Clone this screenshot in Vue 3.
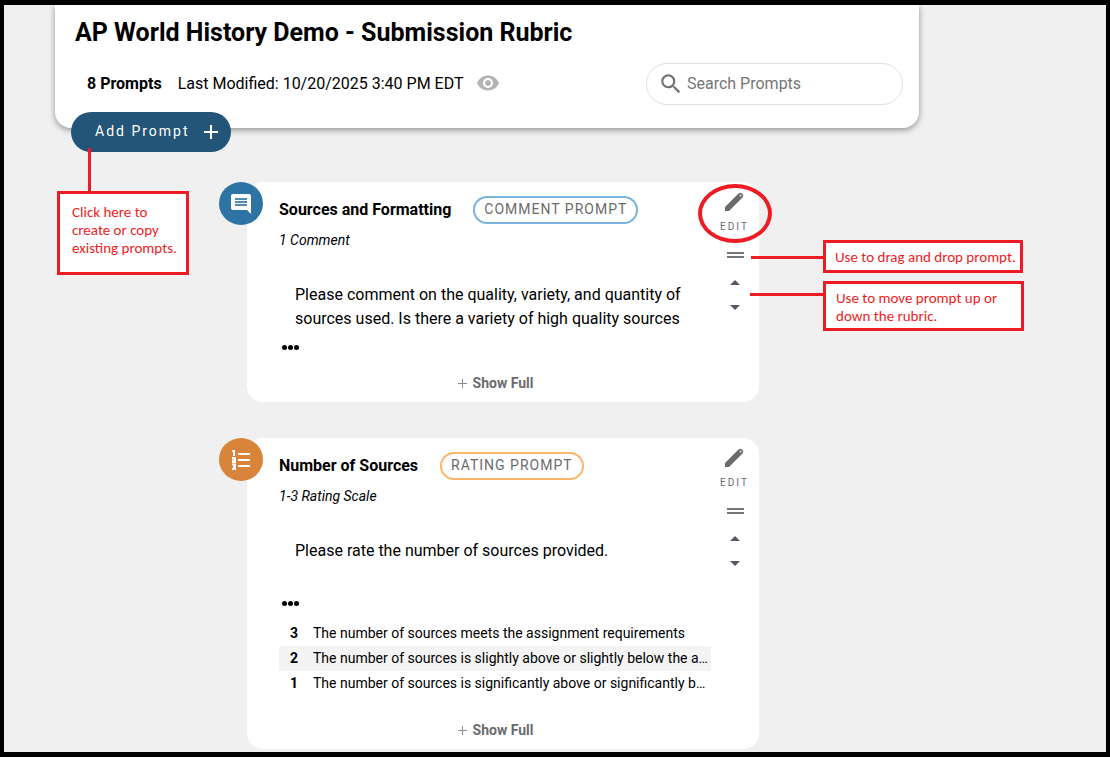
<script setup>
import { ref } from 'vue'

const search = ref('')

const prompts = [
  {
    id: 'formatting',
    kind: 'comment',
    title: 'Sources and Formatting',
    badge: 'COMMENT PROMPT',
    subtitle: '1 Comment',
    text: 'Please comment on the quality, variety, and quantity of sources used. Is there a variety of high quality sources',
    ratings: [],
  },
  {
    id: 'number',
    kind: 'rating',
    title: 'Number of Sources',
    badge: 'RATING PROMPT',
    subtitle: '1-3 Rating Scale',
    text: 'Please rate the number of sources provided.',
    ratings: [
      { score: 3, label: 'The number of sources meets the assignment requirements' },
      { score: 2, label: 'The number of sources is slightly above or slightly below the a…' },
      { score: 1, label: 'The number of sources is significantly above or significantly b…' },
    ],
  },
]
</script>

<template>
  <main class="frame">
    <header class="header">
      <h1>AP World History Demo - Submission Rubric</h1>
      <div class="meta">
        <div class="facts">
          <strong>8 Prompts</strong>
          <span>Last Modified: 10/20/2025 3:40 PM EDT</span>
          <button class="plain eye" type="button" aria-label="Preview">
            <svg width="24" height="24" viewBox="0 0 24 24" fill="#b4b4b4">
              <path d="M12 4.500C7 4.500 2.730 7.610 1 12c1.730 4.390 6 7.500 11 7.500s9.270-3.110 11-7.500c-1.730-4.390-6-7.500-11-7.500zM12 17c-2.760 0-5-2.240-5-5s2.240-5 5-5 5 2.240 5 5-2.240 5-5 5zm0-8c-1.660 0-3 1.340-3 3s1.340 3 3 3 3-1.340 3-3-1.340-3-3-3z" />
            </svg>
          </button>
        </div>
        <label class="search">
          <svg width="26" height="26" viewBox="0 0 24 24" fill="#737373">
            <path d="M15.500 14h-.79l-.28-.27A6.471 6.471 0 0 0 16 9.500 6.500 6.500 0 1 0 9.500 16c1.610 0 3.090-.59 4.230-1.570l.27.28v.79l5 4.990L20.490 19l-4.990-5zm-6 0C7.010 14 5 11.990 5 9.500S7.010 5 9.500 5 14 7.010 14 9.500 11.990 14 9.500 14z" />
          </svg>
          <input v-model="search" type="text" placeholder="Search Prompts" aria-label="Search Prompts" />
        </label>
      </div>
    </header>

    <button class="add" type="button">
      <span>Add Prompt</span>
      <svg width="16" height="16" viewBox="0 0 16 16" stroke="#fff" stroke-width="2">
        <path d="M8 1v14M1 8h14" />
      </svg>
    </button>

    <section class="cards">
      <article v-for="p in prompts" :key="p.id" class="card" :class="p.kind">
        <div class="kind-icon">
          <svg v-if="p.kind === 'comment'" width="24" height="24" viewBox="0 0 24 24">
            <path fill="#fff" d="M21.990 4c0-1.100-.89-2-1.990-2H4c-1.100 0-2 .9-2 2v12c0 1.100.9 2 2 2h14l4 4z" />
            <path stroke="#4f8bb5" stroke-width="2" d="M6 7h12M6 10h12M6 13h12" />
          </svg>
          <svg v-else width="22" height="22" viewBox="0 0 22 22" fill="none" stroke="#fff">
            <path d="M8 5h12M8 11h12M8 17h12" stroke-width="2" />
            <path d="M2 2h2v5M2 9h3.500M5 9v2.500H3V13h3M2 15.500h3v4.500H2M3 18h2" stroke-width="2" />
          </svg>
        </div>

        <div class="body">
          <div class="head">
            <h2>{{ p.title }}</h2>
            <span class="badge">{{ p.badge }}</span>
          </div>
          <p class="subtitle">{{ p.subtitle }}</p>
          <p class="text">{{ p.text }}</p>
          <div class="dots"><i></i><i></i><i></i></div>
          <table v-if="p.ratings.length" class="ratings">
            <tbody>
              <tr v-for="r in p.ratings" :key="r.score">
                <th scope="row">{{ r.score }}</th>
                <td>{{ r.label }}</td>
              </tr>
            </tbody>
          </table>
          <button class="plain show" type="button">
            <svg width="10" height="10" viewBox="0 0 10 10" stroke="#8c8c96">
              <path d="M5.500 1v9M1 5.500h9" />
            </svg>
            Show Full
          </button>
        </div>

        <div class="tools">
          <button class="plain edit" type="button">
            <svg width="24" height="24" viewBox="0 0 24 24">
              <path fill="#6b6b6b" d="M3 17V21h4L20.500 7.500a2.600 2.600 0 0 0 0-3.600l-.4-.4a2.600 2.600 0 0 0-3.600 0z" />
              <circle cx="18.500" cy="5.500" r="1" fill="#e4e4e4" />
            </svg>
            <span>EDIT</span>
          </button>
          <button class="plain drag" type="button" aria-label="Drag">
            <svg width="18" height="8" viewBox="0 0 18 8" fill="#757575">
              <path d="M1 1h17v2H1zM1 5h17v2H1z" />
            </svg>
          </button>
          <button class="plain arrow" type="button" aria-label="Move up">
            <svg width="10" height="5" viewBox="0 0 10 5" fill="#54566b"><path d="M0 5l5-5 5 5z" /></svg>
          </button>
          <button class="plain arrow" type="button" aria-label="Move down">
            <svg width="10" height="5" viewBox="0 0 10 5" fill="#54566b"><path d="M0 0h10L5 5z" /></svg>
          </button>
        </div>
      </article>
    </section>

    <div class="line line-add"></div>
    <div class="line line-drag"></div>
    <div class="line line-move"></div>
    <div class="ring"></div>
    <aside class="note note-add">Click here to create or copy existing prompts.</aside>
    <aside class="note note-drag">Use to drag and drop prompt.</aside>
    <aside class="note note-move">Use to move prompt up or down the rubric.</aside>
  </main>
</template>

<style>
body {
  margin: 0;
  background: #fff;
}
</style>

<style scoped>
* {
  box-sizing: border-box;
}
.frame {
  position: relative;
  border: solid #000;
  border-width: 5px 4px;
  background: #f0f0f0;
  padding: 0 16px 3px 51px;
  font-family: Roboto, "Liberation Sans", sans-serif;
  font-size: 16px;
  color: #000;
}
h1,
h2,
p {
  margin: 0;
}
svg {
  display: block;
  flex: none;
}
.plain {
  border: 0;
  padding: 0;
  background: none;
  font-family: inherit;
  cursor: pointer;
}
.header {
  max-width: 864px;
  padding: 12px 16px 23px 20px;
  background: #fff;
  border-radius: 0 0 16px 16px;
  box-shadow: 0 2px 6px rgba(0, 0, 0, 0.4);
  clip-path: inset(0 -12px -12px -12px);
}
h1 {
  font-size: 25px;
  line-height: 32px;
  font-weight: 700;
}
.meta {
  display: flex;
  align-items: center;
  justify-content: space-between;
  margin-top: 14px;
  padding-left: 12px;
}
.facts {
  display: flex;
  align-items: center;
  gap: 16px;
  padding-bottom: 2px;
}
.eye {
  margin-left: -4px;
}
.search {
  display: flex;
  align-items: center;
  gap: 3px;
  width: 257px;
  height: 42px;
  padding: 0 11px;
  border: 1px solid #e0e0e0;
  border-radius: 21px;
}
.search input {
  flex: 1;
  min-width: 0;
  border: 0;
  outline: 0;
  padding: 0 0 2px;
  background: none;
  font: inherit;
}
.search input::placeholder {
  color: #757575;
  opacity: 1;
}
.add {
  position: relative;
  display: flex;
  align-items: center;
  justify-content: space-between;
  width: 160px;
  height: 40px;
  margin: -16px 0 0 16px;
  padding: 0 12px 0 24px;
  border: 0;
  border-radius: 20px;
  background: #235578;
  color: #fff;
  font-family: inherit;
  font-size: 14px;
  letter-spacing: 2px;
  cursor: pointer;
}
.add span {
  padding-bottom: 2px;
}
.cards {
  display: flex;
  flex-direction: column;
  gap: 36px;
  max-width: 512px;
  margin: 30px 0 0 192px;
}
.card {
  position: relative;
  display: grid;
  grid-template-columns: minmax(0, 1fr) 48px;
  padding: 0 0 7px 32px;
  background: #fff;
  border-radius: 16px;
}
.kind-icon {
  position: absolute;
  left: -28px;
  top: 0;
  display: grid;
  place-items: center;
  width: 44px;
  height: 43px;
  border-radius: 50%;
}
.comment .kind-icon {
  background: #2d74a5;
}
.rating .kind-icon {
  background: #d9843b;
}
.body {
  display: flex;
  flex-direction: column;
  padding-top: 14px;
}
.head {
  display: flex;
  align-items: center;
  gap: 22px;
}
h2 {
  font-size: 16px;
  line-height: 24px;
  font-weight: 700;
}
.badge {
  height: 28px;
  padding: 0 9px;
  border: 2px solid #7ab3dc;
  border-radius: 14px;
  font-size: 14px;
  line-height: 23px;
  letter-spacing: 1px;
  color: #6b6b6b;
  white-space: nowrap;
}
.rating .badge {
  border-color: #ffb468;
}
.subtitle {
  margin-top: 8px;
  font-size: 14px;
  line-height: 16px;
  font-style: italic;
}
.text {
  min-height: 48px;
  margin-top: 35px;
  padding: 0 16px;
  line-height: 24px;
}
.dots {
  display: flex;
  align-items: center;
  gap: 1px;
  height: 24px;
  margin-top: 4px;
  padding-left: 3px;
}
.dots i {
  width: 5px;
  height: 5px;
  border-radius: 50%;
  background: #000;
}
.ratings {
  width: 100%;
  margin: 6px 0 10px;
  border-collapse: collapse;
  table-layout: fixed;
  font-size: 14px;
  line-height: 25px;
}
.ratings tr:nth-child(even) {
  background: #f4f4f4;
}
.ratings th {
  width: 30px;
  padding: 0;
  font-weight: 700;
}
.ratings td {
  padding: 0 0 0 4px;
  white-space: nowrap;
}
.show {
  display: flex;
  align-items: center;
  align-self: center;
  gap: 6px;
  margin-top: 12px;
  font-size: 14px;
  line-height: 24px;
  font-weight: 700;
  color: #6b6b6b;
}
.tools {
  display: flex;
  flex-direction: column;
  align-items: center;
  padding: 8px 1px 0 0;
}
.edit {
  display: flex;
  flex-direction: column;
  align-items: center;
  gap: 6px;
  font-size: 10px;
  line-height: 14px;
  letter-spacing: 2px;
  color: #6b6b6b;
}
.drag {
  padding: 17px 0 11px;
}
.arrow {
  display: grid;
  place-items: center;
  width: 24px;
  height: 24px;
  margin-bottom: 1px;
}

/* Tutorial overlay */
.note,
.line,
.ring {
  position: absolute;
}
.note {
  border: 3px solid #ed1c24;
  background: #fff;
  color: #ed1c24;
  font-family: Carlito, Calibri, Lato, sans-serif;
  font-size: 15px;
  line-height: 18px;
}
.note-add {
  left: 53px;
  top: 186px;
  width: 132px;
  padding: 9px 8px 15px 12px;
}
.note-drag {
  left: 819px;
  top: 235px;
  width: 200px;
  padding: 5px 0 4px 9px;
}
.note-move {
  left: 819px;
  top: 276px;
  width: 201px;
  padding: 5px 10px 3px;
}
.line {
  background: #ed1c24;
}
.line-add {
  left: 84px;
  top: 143px;
  width: 3px;
  height: 44px;
}
.line-drag {
  left: 747px;
  top: 251px;
  width: 74px;
  height: 3px;
}
.line-move {
  left: 746px;
  top: 288px;
  width: 75px;
  height: 3px;
}
.ring {
  left: 694px;
  top: 179px;
  width: 74px;
  height: 59px;
  border: 4px solid #ed1c24;
  border-radius: 50%;
  pointer-events: none;
}
</style>
